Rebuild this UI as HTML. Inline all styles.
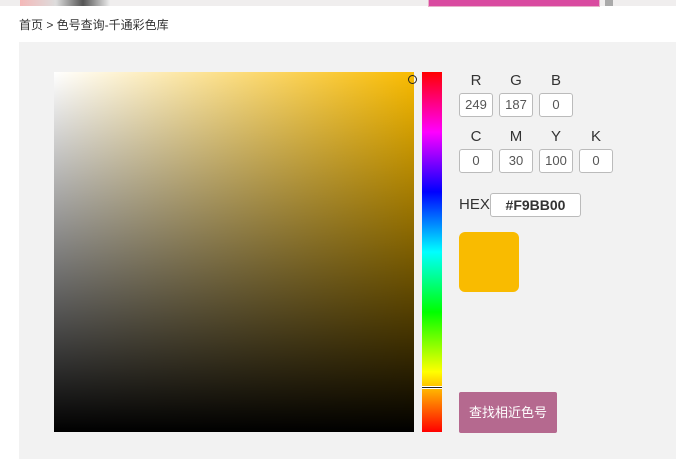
<!DOCTYPE html>
<html><head><meta charset="utf-8"><style>
body{margin:0;width:676px;height:459px;background:#fff;position:relative;overflow:hidden;font-family:"Liberation Sans","Noto Sans CJK SC",sans-serif}
.a{position:absolute}
.crumb{left:19px;top:16px;font-size:12px;color:#333}
.panel{left:19px;top:42px;width:657px;height:417px;background:#f2f2f2}
.sv{left:54px;top:72px;width:360px;height:360px;background:linear-gradient(to top,#000,rgba(0,0,0,0)),linear-gradient(to right,#fff,#f9bb00)}
.hue{left:422px;top:72px;width:20px;height:360px;background:linear-gradient(to bottom,#f00,#f0f 16.7%,#00f 33.3%,#0ff 50%,#0f0 66.7%,#ff0 83.3%,#f00)}
.lbl{font-size:15px;color:#333;width:34px;text-align:center}
.in{width:32px;height:22px;border:1px solid #bbb;border-radius:3px;background:#fff;font-size:13px;color:#555;text-align:center;line-height:22px}
</style></head><body>
<div class="a" style="left:0;top:0;width:676px;height:6px;background:#f0eeee"></div>
<div class="a" style="left:20px;top:0;width:90px;height:6px;background:linear-gradient(to right,#f4b8b8,#ddd 40%,#555 70%,#eee)"></div>
<div class="a" style="left:428px;top:0;width:170px;height:6px;background:#d94aa0;border:1px solid #e8b0c8;border-top:0"></div>
<div class="a" style="left:605px;top:0;width:8px;height:6px;background:#aaa"></div>
<div class="a crumb">首页 &gt; 色号查询-千通彩色库</div>
<div class="a panel"></div>
<div class="a sv"></div>
<div class="a" style="left:408px;top:75px;width:7px;height:7px;border:1px solid #222;border-radius:50%"></div>
<div class="a hue"></div>
<div class="a" style="left:422px;top:387px;width:20px;height:1px;background:#222;box-shadow:0 1px 0 #fff,0 -1px 0 #fff"></div>
<div class="a lbl" style="left:459px;top:72px">R</div><div class="a lbl" style="left:499px;top:72px">G</div><div class="a lbl" style="left:539px;top:72px">B</div>
<div class="a in" style="left:459px;top:93px">249</div><div class="a in" style="left:499px;top:93px">187</div><div class="a in" style="left:539px;top:93px">0</div>
<div class="a lbl" style="left:459px;top:128px">C</div><div class="a lbl" style="left:499px;top:128px">M</div><div class="a lbl" style="left:539px;top:128px">Y</div><div class="a lbl" style="left:579px;top:128px">K</div>
<div class="a in" style="left:459px;top:149px">0</div><div class="a in" style="left:499px;top:149px">30</div><div class="a in" style="left:539px;top:149px">100</div><div class="a in" style="left:579px;top:149px">0</div>
<div class="a" style="left:459px;top:196px;font-size:15px;color:#333">HEX</div>
<div class="a in" style="left:490px;top:193px;width:89px;font-weight:bold;font-size:14px;color:#333">#F9BB00</div>
<div class="a" style="left:459px;top:232px;width:60px;height:60px;border-radius:6px;background:#f9bb00"></div>
<div class="a" style="left:459px;top:392px;width:98px;height:41px;border-radius:2px;background:#b5698f;color:#fff;font-size:13px;text-align:center;line-height:41px">查找相近色号</div>
</body></html>
